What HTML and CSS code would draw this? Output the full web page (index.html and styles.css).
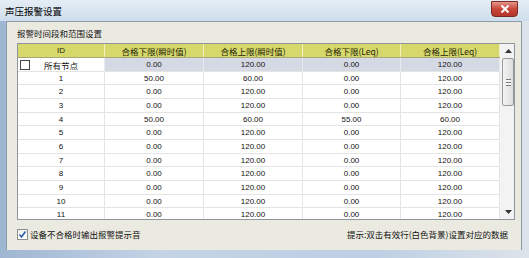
FILE: index.html
```html
<!DOCTYPE html>
<html lang="zh-CN">
<head>
    <meta charset="UTF-8">
    <title>声压报警设置</title>
    <link rel="stylesheet" href="styles.css">
</head>
<body>

<div class="window">
    <div class="titlebar">
        <span class="title">声压报警设置</span>
        <span class="close-btn">
            <svg width="10" height="8" viewBox="0 0 10 8"><path d="M1.5 0.5 L8.5 7.5 M8.5 0.5 L1.5 7.5" stroke="#fff" stroke-width="2"/></svg>
        </span>
    </div>

    <div class="client">
        <div class="group-label">报警时间段和范围设置</div>

        <div class="grid">
            <div class="grid-body">
                <div class="row head">
                    <div class="cell c-id">ID</div>
                    <div class="cell c-2">合格下限(瞬时值)</div>
                    <div class="cell c-3">合格上限(瞬时值)</div>
                    <div class="cell c-4">合格下限(Leq)</div>
                    <div class="cell c-5">合格上限(Leq)</div>
                </div>
                <div class="row all">
                    <div class="cell c-id"><span class="box"></span>所有节点</div>
                    <div class="cell c-2">0.00</div>
                    <div class="cell c-3">120.00</div>
                    <div class="cell c-4">0.00</div>
                    <div class="cell c-5">120.00</div>
                </div>
                <div class="row"><div class="cell c-id">1</div><div class="cell c-2">50.00</div><div class="cell c-3">60.00</div><div class="cell c-4">0.00</div><div class="cell c-5">120.00</div></div>
                <div class="row"><div class="cell c-id">2</div><div class="cell c-2">0.00</div><div class="cell c-3">120.00</div><div class="cell c-4">0.00</div><div class="cell c-5">120.00</div></div>
                <div class="row"><div class="cell c-id">3</div><div class="cell c-2">0.00</div><div class="cell c-3">120.00</div><div class="cell c-4">0.00</div><div class="cell c-5">120.00</div></div>
                <div class="row"><div class="cell c-id">4</div><div class="cell c-2">50.00</div><div class="cell c-3">60.00</div><div class="cell c-4">55.00</div><div class="cell c-5">60.00</div></div>
                <div class="row"><div class="cell c-id">5</div><div class="cell c-2">0.00</div><div class="cell c-3">120.00</div><div class="cell c-4">0.00</div><div class="cell c-5">120.00</div></div>
                <div class="row"><div class="cell c-id">6</div><div class="cell c-2">0.00</div><div class="cell c-3">120.00</div><div class="cell c-4">0.00</div><div class="cell c-5">120.00</div></div>
                <div class="row"><div class="cell c-id">7</div><div class="cell c-2">0.00</div><div class="cell c-3">120.00</div><div class="cell c-4">0.00</div><div class="cell c-5">120.00</div></div>
                <div class="row"><div class="cell c-id">8</div><div class="cell c-2">0.00</div><div class="cell c-3">120.00</div><div class="cell c-4">0.00</div><div class="cell c-5">120.00</div></div>
                <div class="row"><div class="cell c-id">9</div><div class="cell c-2">0.00</div><div class="cell c-3">120.00</div><div class="cell c-4">0.00</div><div class="cell c-5">120.00</div></div>
                <div class="row"><div class="cell c-id">10</div><div class="cell c-2">0.00</div><div class="cell c-3">120.00</div><div class="cell c-4">0.00</div><div class="cell c-5">120.00</div></div>
                <div class="row"><div class="cell c-id">11</div><div class="cell c-2">0.00</div><div class="cell c-3">120.00</div><div class="cell c-4">0.00</div><div class="cell c-5">120.00</div></div>
            </div>

            <!-- vertical scrollbar -->
            <div class="scrollbar">
                <div class="arrow">
                    <svg width="7" height="4" viewBox="0 0 7 4"><path d="M0 4 L3.5 0 L7 4 Z" fill="#333"/></svg>
                </div>
                <div class="thumb"><span class="grip"></span></div>
                <div class="track"></div>
                <div class="arrow">
                    <svg width="7" height="4" viewBox="0 0 7 4"><path d="M0 0 L3.5 4 L7 0 Z" fill="#333"/></svg>
                </div>
            </div>
        </div>

        <div class="footer">
            <label class="check">
                <span class="checkbox">
                    <svg width="9" height="9" viewBox="0 0 9 9"><path d="M1.5 4.5 L3.5 7 L7.5 1.5" fill="none" stroke="#2a5caa" stroke-width="1.6"/></svg>
                </span>
                设备不合格时输出报警提示音
            </label>
            <span class="hint">提示:双击有效行(白色背景)设置对应的数据</span>
        </div>
    </div>
</div>

</body>
</html>
```

FILE: styles.css
```css
body {
    margin: 0;
    background: #ffffff;
    font-family: "Noto Sans CJK SC", "DejaVu Sans", sans-serif;
    color: #111;
}

.window {
    width: 529px;
    height: 258px;
    display: flex;
    flex-direction: column;
    background: linear-gradient(to right, #9fb6d2 0%, #c4d4e6 30%, #bccfe3 70%, #dde3ea 100%);
    overflow: hidden;
}

.titlebar {
    height: 21px;
    display: flex;
    align-items: center;
    justify-content: space-between;
    padding: 0 11px 0 5px;
    background: linear-gradient(#e4edf6, #cfdeec);
}

.title {
    font-size: 9.5px;
    color: #000;
}

.close-btn {
    width: 25px;
    height: 14px;
    margin-top: -4px;
    border: 1px solid #7a2a22;
    border-radius: 0 0 4px 4px;
    background: linear-gradient(#e3968a, #c8473a 50%, #b5352a);
    display: flex;
    align-items: center;
    justify-content: center;
}

/* dialog client area */
.client {
    height: 228px;
    margin: 0 7px 8px 6px;
    background: #ebeae0;
    border: 1px solid #8c9aab;
    border-bottom: none;
    padding: 0 12px 0 10px;
    display: flex;
    flex-direction: column;
}

.group-label {
    margin-top: 4px;
    line-height: 14px;
    height: 14px;
    font-size: 8.5px;
    margin-bottom: 3px;
}

.grid {
    width: 496px;
    height: 175px;
    border: 1px solid #8e959c;
    background: #ffffff;
    display: flex;
    overflow: hidden;
}

.grid-body {
    width: 482px;
    overflow: hidden;
}

.row {
    display: flex;
    height: 14px;
    border-bottom: 1px solid #e4e4e4;
    box-sizing: border-box;
}

.row:nth-child(3n) {
    height: 13px;
}

.cell {
    box-sizing: border-box;
    border-right: 1px solid #e4e4e4;
    display: flex;
    align-items: center;
    justify-content: center;
    font-family: "Liberation Sans", Arial, sans-serif;
    font-size: 8px;
    color: #111;
}

.c-id { width: 87px; }
.c-2 { width: 99px; }
.c-3 { width: 99px; }
.c-4 { width: 98px; }
.c-5 { width: 99px; }

.row.head {
    height: 14px;
    background: #d7d86c;
    border-bottom: 1px solid #a9a97a;
}

.row.head .cell {
    border-right: 1px solid #f1f1c4;
    font-family: "Noto Sans CJK SC", sans-serif;
    font-size: 8.5px;
    color: #1e1e08;
}

.row.head .c-id {
    font-family: "Liberation Sans", Arial, sans-serif;
    font-size: 8px;
}

.row.all .cell {
    background: #d5d9e3;
    border-right-color: #e8eaf0;
}

.row.all .c-id {
    background: #ffffff;
    font-family: "Noto Sans CJK SC", sans-serif;
    font-size: 8.5px;
    position: relative;
}

.box {
    position: absolute;
    left: 2px;
    top: 2px;
    width: 8px;
    height: 8px;
    border: 1px solid #444;
    background: #fff;
}

.scrollbar {
    width: 14px;
    padding-left: 2px;
    box-sizing: border-box;
    background: #f3f3f3;
    display: flex;
    flex-direction: column;
}

.arrow {
    height: 14px;
    display: flex;
    align-items: center;
    justify-content: center;
}

.thumb {
    height: 46px;
    border: 1px solid #9a9a9a;
    border-radius: 2px;
    background: linear-gradient(to right, #f4f4f4, #dcdcdc);
    display: flex;
    align-items: center;
    justify-content: center;
}

.grip {
    width: 5px;
    height: 5px;
    border-top: 1px solid #777;
    border-bottom: 1px solid #777;
    background: linear-gradient(#f4f4f4 40%, #777 40%, #777 60%, #f4f4f4 60%);
}

.track {
    flex: 1;
}

.footer {
    margin-top: 8px;
    height: 12px;
    display: flex;
    align-items: center;
    justify-content: space-between;
    font-size: 8.5px;
}

.check {
    display: flex;
    align-items: center;
    gap: 2px;
}

.checkbox {
    width: 9px;
    height: 9px;
    border: 1px solid #8f8f8f;
    background: linear-gradient(#f0f0f0, #ffffff);
    display: flex;
}

.hint {
    margin-right: 1px;
}
```
